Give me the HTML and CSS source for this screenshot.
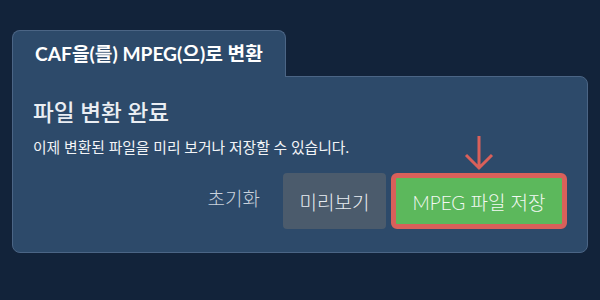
FILE: index.html
```html
<!DOCTYPE html>
<html>
<head>
  <link rel="stylesheet" href="styles.css">
</head>
<body>
  <div class="panel">
    <div class="tab">CAF을(를) MPEG(으)로 변환</div>
    <div class="card">
      <div class="card-title">파일 변환 완료</div>
      <div class="card-text">이제 변환된 파일을 미리 보거나 저장할 수 있습니다.</div>
      <div class="actions">
        <button class="btn btn-link">초기화</button>
        <button class="btn btn-gray">미리보기</button>
        <div class="save-wrap">
          <svg class="hint-arrow" width="30" height="36" viewBox="0 0 30 36">
            <path d="M15 1 V33 M2 20 L15 33 L28 20" fill="none" stroke="#d9605a" stroke-width="3"/>
          </svg>
          <button class="btn btn-save">MPEG 파일 저장</button>
        </div>
      </div>
    </div>
  </div>
</body>
</html>
```

FILE: styles.css
```css
body {
  margin: 0;
  background: #12233a;
  font-family: Lato, "Noto Sans CJK KR", sans-serif;
  color: #eef2f6;
}

.panel {
  width: 576px;
  margin: 30px 0 0 12px;
}

.tab {
  position: relative;
  display: inline-block;
  margin-bottom: -1px;
  padding: 12px 22px 12px 22px;
  height: 22px;
  background: #2d4a6a;
  border: 1px solid #4b6585;
  border-bottom: none;
  border-radius: 8px 8px 0 0;
  font-size: 19.2px;
  font-weight: 700;
  line-height: 22px;
  color: #fff;
}

.card {
  background: #2d4a6a;
  border: 1px solid #4b6585;
  border-radius: 0 8px 8px 8px;
  padding: 21px 20px 19px 20px;
}

.card-title {
  font-size: 22.6px;
  font-weight: 500;
  line-height: 30px;
  color: #eaeef3;
}

.card-text {
  margin-top: 9px;
  font-size: 14.8px;
  line-height: 20px;
  color: #f2f4f7;
}

.actions {
  display: flex;
  justify-content: flex-end;
  align-items: center;
  gap: 5px;
  margin-top: 12px;
}

.btn {
  font-family: Lato, "Noto Sans CJK KR", sans-serif;
  font-size: 19px;
  font-weight: 300;
  height: 56px;
  border: none;
  border-radius: 4px;
  color: #e8edf2;
  cursor: pointer;
}

.btn-link {
  background: none;
  padding: 0 18px;
  color: #c9d2dc;
  margin-bottom: 8px;
}

.btn-gray {
  background: #4b5b6c;
  padding: 0;
  width: 103px;
}

.save-wrap {
  position: relative;
}

.hint-arrow {
  position: absolute;
  left: 50%;
  bottom: 100%;
  margin-left: -15px;
  margin-bottom: 2px;
}

.btn-save {
  display: block;
  width: 176px;
  padding: 0;
  background: #5cb85c;
  border: 5px solid #d9605a;
  border-radius: 6px;
  color: #f4f8f4;
}
```
